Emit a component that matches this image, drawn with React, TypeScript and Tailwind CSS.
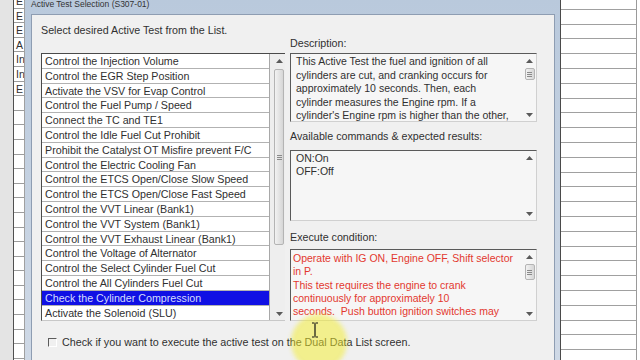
import React from "react";

const items = [
  "Control the Injection Volume",
  "Control the EGR Step Position",
  "Activate the VSV for Evap Control",
  "Control the Fuel Pump / Speed",
  "Connect the TC and TE1",
  "Control the Idle Fuel Cut Prohibit",
  "Prohibit the Catalyst OT Misfire prevent F/C",
  "Control the Electric Cooling Fan",
  "Control the ETCS Open/Close Slow Speed",
  "Control the ETCS Open/Close Fast Speed",
  "Control the VVT Linear (Bank1)",
  "Control the VVT System (Bank1)",
  "Control the VVT Exhaust Linear (Bank1)",
  "Control the Voltage of Alternator",
  "Control the Select Cylinder Fuel Cut",
  "Control the All Cylinders Fuel Cut",
  "Check the Cylinder Compression",
  "Activate the Solenoid (SLU)",
];

const leftCells = ["E", "E", "E", "A", "In", "In", "E", "", "", "", "", "", "", "", "", "", "", "", "", "", "", "", "", "", "", ""];

const Arrow = ({ up }: { up?: boolean }) => (
  <svg width="7" height="4" viewBox="0 0 7 4" className="block">
    <polygon points={up ? "3.5,0 7,4 0,4" : "0,0 7,0 3.5,4"} fill="#5a5a5a" />
  </svg>
);

const Thumb = ({ h }: { h: string }) => (
  <div className={`w-[10px] ${h} rounded-[2px] border border-[#b4b4b4] bg-gradient-to-r from-[#f2f2f2] to-[#d6d6d6] flex items-center justify-center`}>
    <div className="flex flex-col gap-[1px]">
      <div className="w-[5px] h-px bg-[#8a8a8a]" />
      <div className="w-[5px] h-px bg-[#8a8a8a]" />
      <div className="w-[5px] h-px bg-[#8a8a8a]" />
    </div>
  </div>
);

const BoxScroll = ({ thumb, thumbH }: { thumb?: boolean; thumbH?: string }) => (
  <div className="w-[13px] shrink-0 flex flex-col items-center pt-[5px] pb-[4px]">
    <Arrow up />
    <div className="mt-[5px] flex-1">{thumb && <Thumb h={thumbH ?? "h-[13px]"} />}</div>
    <Arrow />
  </div>
);

const App = () => {
  return (
    <div className="relative w-[640px] h-[360px] overflow-hidden flex bg-[#ececec] font-['Liberation_Sans',Arial,sans-serif] text-[#303030]">
      {/* background grid on the left */}
      <div className="w-[13px] shrink-0 bg-[#e4e4e4]" />
      <div className="w-[12px] shrink-0 border-l border-[#505050] border-r border-r-[#a0a0a0] bg-white flex flex-col -mt-[6px] overflow-hidden">
        {leftCells.map((c, i) => (
          <div key={i} className="h-[14.6px] shrink-0 border-b border-[#9c9c9c] pl-[2px] text-[10.5px] leading-[14px] whitespace-nowrap overflow-hidden">
            {c}
          </div>
        ))}
      </div>

      {/* dialog window */}
      <div className="w-[535px] shrink-0 flex flex-col bg-gradient-to-b from-[#b9c9dc] to-[#cfd9e6] pl-[6px] pr-[5px]">
        <div className="h-[14px] shrink-0 text-[8.5px] leading-[8px] text-[#333]">Active Test Selection (S307-01)</div>
        <div className="flex-1 bg-[#f0f0f0] border-t border-l border-r border-[#8e9db2] pl-[9px] pt-[9px]">
          <div className="text-[10.7px] leading-[13px]">Select desired Active Test from the List.</div>
          <div className="flex gap-[5px]">
            {/* list */}
            <div className="w-[244px] pt-[16px]">
              <div className="flex border-t border-l border-[#4a4a4a] border-b border-b-[#c8c8c8]">
                <div className="flex-1 bg-white border-r border-[#a8a8a8]">
                  {items.map((t, i) => (
                    <div
                      key={t}
                      className={`h-[14.8px] pl-[3px] text-[10.7px] leading-[14.5px] whitespace-nowrap border-b border-[#b2b2b2] ${
                        i === 16 ? "bg-[#1010e4] text-[#d4dcff]" : ""
                      } ${i === items.length - 1 ? "border-b-0" : ""}`}
                    >
                      {t}
                    </div>
                  ))}
                </div>
                <div className="w-[15px] shrink-0 bg-[#eeeeee] flex flex-col items-center pt-[5px] pb-[4px] pl-[3px]">
                  <Arrow up />
                  <div className="mt-[6px] flex-1">
                    <Thumb h="h-[176px]" />
                  </div>
                  <Arrow />
                </div>
              </div>
            </div>

            {/* right column */}
            <div className="w-[247px] flex flex-col">
              <div className="text-[10.7px] leading-[13px]">Description:</div>
              <div className="mt-[3px] h-[69px] flex bg-[#f6f6f6] border-t border-l border-[#5a5a5a] border-b border-r border-b-[#d0d0d0] border-r-[#d0d0d0] overflow-hidden">
                <div className="flex-1 pl-[5px] pt-[1px] text-[10.5px] leading-[13.5px] whitespace-nowrap">
                  <div>This Active Test the fuel and ignition of all</div>
                  <div>cylinders are cut, and cranking occurs for</div>
                  <div>approximately 10 seconds. Then, each</div>
                  <div>cylinder measures the Engine rpm. If a</div>
                  <div>cylinder's Engine rpm is higher than the other,</div>
                </div>
                <BoxScroll thumb thumbH="h-[12px]" />
              </div>

              <div className="mt-[8px] text-[10.7px] leading-[13px]">Available commands &amp; expected results:</div>
              <div className="mt-[7px] h-[71px] flex bg-[#f6f6f6] border-t border-l border-[#5a5a5a] border-b border-r border-b-[#d0d0d0] border-r-[#d0d0d0]">
                <div className="flex-1 pl-[5px] pt-[1px] text-[10.5px] leading-[13.4px]">
                  <div>ON:On</div>
                  <div>OFF:Off</div>
                </div>
                <BoxScroll />
              </div>

              <div className="mt-[10px] text-[10.7px] leading-[13px]">Execute condition:</div>
              <div className="mt-[5px] h-[72px] flex bg-[#f6f6f6] border-t border-l border-[#5a5a5a] border-b border-r border-b-[#d0d0d0] border-r-[#d0d0d0] overflow-hidden">
                <div className="flex-1 pl-[2px] pt-[2px] text-[10.5px] leading-[13.3px] text-[#e3382f] whitespace-pre">
                  <div>Operate with IG ON, Engine OFF, Shift selector</div>
                  <div>in P.</div>
                  <div>This test requires the engine to crank</div>
                  <div>continuously for approximately 10</div>
                  <div>seconds.  Push button ignition switches may</div>
                </div>
                <BoxScroll thumb thumbH="h-[16px]" />
              </div>
            </div>
          </div>

          <div className="mt-[14px] pl-[7px] flex items-center gap-[5px]">
            <div className="w-[9px] h-[9px] border-t border-l border-[#5c5c5c] border-b border-r border-b-[#ffffff] border-r-[#ffffff]" />
            <span className="text-[10.75px] leading-[14px]">Check if you want to execute the active test on the Dual Data List screen.</span>
          </div>
        </div>
      </div>

      {/* background grid on the right */}
      <div className="flex-1 flex flex-col -mt-[5px] bg-white border-l border-[#4a4a4a] overflow-hidden">
        {Array.from({ length: 26 }).map((_, i) => (
          <div key={i} className="h-[14.8px] shrink-0 border-b border-[#a0a0a0] mr-[3px] border-r border-r-[#9a9a9a]" />
        ))}
      </div>

      {/* cursor highlight */}
      <div className="absolute left-[291px] top-[314px] w-[56px] h-[56px] rounded-full bg-[#f4ee2a]/50 blur-[2px]" />
      <svg className="absolute left-[311px] top-[322px]" width="8" height="16" viewBox="0 0 8 16">
        <path d="M1 1h2.5M4.5 1H7M4 1.5v13M1 15h2.5M4.5 15H7" stroke="#111" strokeWidth="1.2" fill="none" />
      </svg>
    </div>
  );
};

export default App;
